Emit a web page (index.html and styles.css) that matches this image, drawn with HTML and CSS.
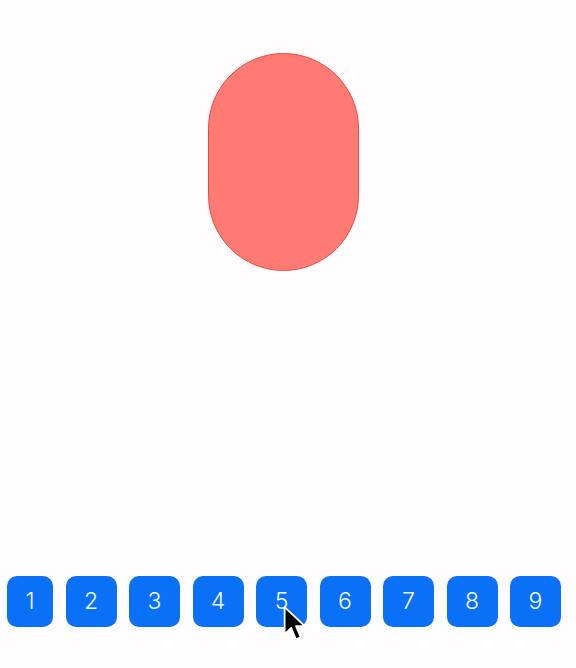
FILE: index.html
```html
<!DOCTYPE html>
<html>
<head>
  <meta charset="UTF-8">
  <meta name="viewport" content="width=device-width, initial-scale=1.0">
  <title>Keys</title>
  <link rel="stylesheet" href="styles.css">
</head>
<body>
  <div class="stage">
    <div class="blob"></div>
  </div>

  <div class="keys">
    <button class="key key-first">1</button>
    <button class="key">2</button>
    <button class="key">3</button>
    <button class="key">4</button>
    <button class="key">5</button>
    <button class="key">6</button>
    <button class="key">7</button>
    <button class="key">8</button>
    <button class="key">9</button>
  </div>

  <!-- pointer hovering key 5 -->
  <svg class="pointer" width="29" height="38" viewBox="0 0 24 32">
    <path d="M2 1 L2 24 L7.5 18.5 L11.5 28 L15.5 26.3 L11.6 17 L19 17 Z"
          fill="#000" stroke="#fff" stroke-width="1.5" stroke-linejoin="round"/>
  </svg>
</body>
</html>
```

FILE: styles.css
```css
html, body{
  margin: 0;
  padding: 0;
}
body{
  width: 576px;
  height: 668px;
  background: #fffdfe;
  font-family: Inter, "Liberation Sans", sans-serif;
  position: relative;
  overflow: hidden;
}
.stage{
  height: 576px;
  padding-top: 53px;
  box-sizing: border-box;
}
.blob{
  width: 151px;
  height: 218px;
  margin-left: 208px;
  box-sizing: border-box;
  background: #ff7b74;
  border: 1px solid #ee4a42;
  border-radius: 76px / 76px;
}
.keys{
  display: flex;
  gap: 12.5px;
  padding-left: 7px;
}
.key{
  width: 51px;
  height: 51px;
  flex: none;
  border: 0;
  border-radius: 10px;
  background: #0a70f6;
  color: #f4f8ff;
  font-family: Inter, "Liberation Sans", sans-serif;
  font-weight: 300;
  font-size: 23px;
  padding: 0;
  line-height: 51px;
}
.key-first{
  width: 46px;
}
.pointer{
  position: absolute;
  left: 281.6px;
  top: 605.8px;
}
```
